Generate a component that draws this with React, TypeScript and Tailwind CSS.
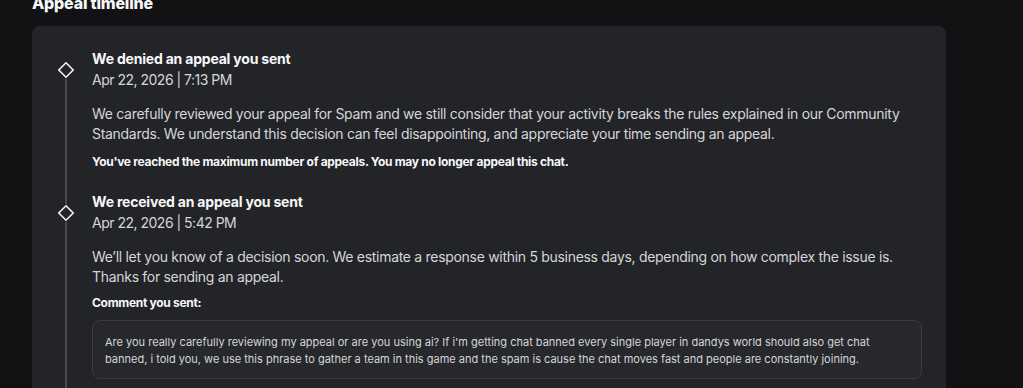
import React from "react";

type Entry = {
  title: string;
  date: string;
  body: string;
  note?: string;
  comment?: string;
};

const entries: Entry[] = [
  {
    title: "We denied an appeal you sent",
    date: "Apr 22, 2026 | 7:13 PM",
    body: "We carefully reviewed your appeal for Spam and we still consider that your activity breaks the rules explained in our Community Standards. We understand this decision can feel disappointing, and appreciate your time sending an appeal.",
    note: "You've reached the maximum number of appeals. You may no longer appeal this chat.",
  },
  {
    title: "We received an appeal you sent",
    date: "Apr 22, 2026 | 5:42 PM",
    body: "We\u2019ll let you know of a decision soon. We estimate a response within 5 business days, depending on how complex the issue is. Thanks for sending an appeal.",
    comment:
      "Are you really carefully reviewing my appeal or are you using ai? If i'm getting chat banned every single player in dandys world should also get chat banned, i told you, we use this phrase to gather a team in this game and the spam is cause the chat moves fast and people are constantly joining.",
  },
];

function Diamond() {
  return (
    <svg width="18" height="18" viewBox="0 0 18 18" className="shrink-0">
      <path d="M9 1.8 L16.2 9 L9 16.2 L1.8 9 Z" fill="#232428" stroke="#f2f2f2" strokeWidth="1.6" />
    </svg>
  );
}

function TimelineItem({ entry, first }: { entry: Entry; first: boolean }) {
  return (
    <div className="flex gap-[17px]">
      <div className="flex w-[18px] flex-col items-center">
        <div className={first ? "h-[10px] w-[2px]" : "h-[10px] w-[2px] bg-[#4a4b50]"} />
        <Diamond />
        <div className="w-[2px] flex-1 bg-[#4a4b50]" />
      </div>
      <div className="flex-1 pr-[24px] pb-[25px]">
        <div className="text-[14px] font-bold leading-[16px] tracking-[-0.2px] text-[#f7f7f8]">{entry.title}</div>
        <div className="mt-[4px] text-[14px] leading-[18px] tracking-[-0.5px] text-[#d5d6d9]">{entry.date}</div>
        <p className="mt-[15px] text-[14px] leading-[20px] tracking-[-0.3px] text-[#d5d6d9]">{entry.body}</p>
        {entry.note && (
          <div className="mt-[11px] text-[12px] font-bold leading-[14px] tracking-[-0.3px] text-[#f7f7f8]">{entry.note}</div>
        )}
        {entry.comment && (
          <>
            <div className="mt-[9px] text-[12px] font-bold leading-[14px] tracking-[-0.3px] text-[#f7f7f8]">Comment you sent:</div>
            <div className="mt-[10px] rounded-[8px] border border-[#3b3c41] bg-[#27282c] px-[12px] pt-[13px] pb-[10px] text-[11px] leading-[17px] text-[#d5d6d9]">
              {entry.comment}
            </div>
          </>
        )}
      </div>
    </div>
  );
}

export default function App() {
  return (
    <div
      className="h-[388px] w-full overflow-hidden bg-[#121214] pl-[32px]"
      style={{ fontFamily: "Inter, 'Noto Sans', sans-serif" }}
    >
      <h2 className="mt-[-7px] text-[16px] font-extrabold leading-[20px] tracking-[-0.2px] text-[#f7f7f8]">Appeal timeline</h2>
      <div className="mt-[13px] w-[914px] rounded-[8px] bg-[#232428] pl-[25px] pt-[25px]">
        {entries.map((e, i) => (
          <TimelineItem key={e.title} entry={e} first={i === 0} />
        ))}
      </div>
    </div>
  );
}
